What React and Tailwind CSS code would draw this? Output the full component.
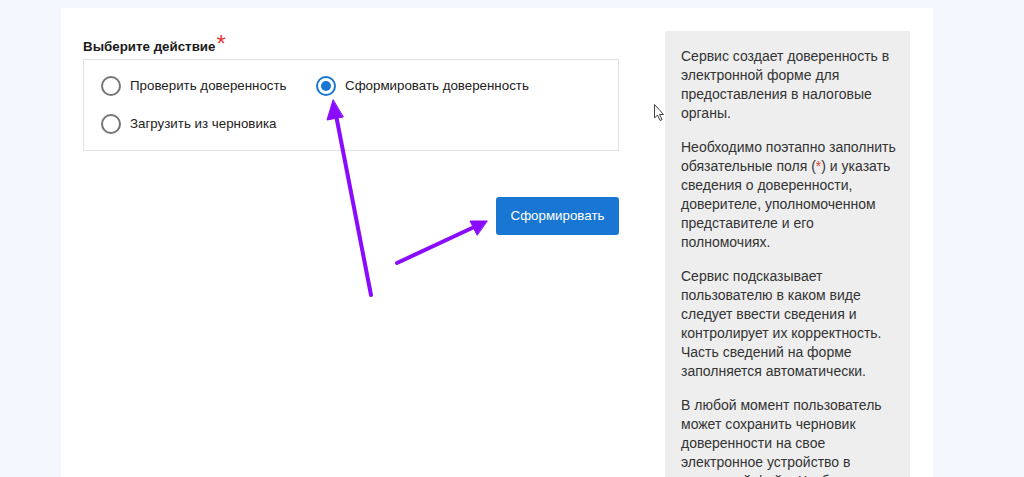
import React from 'react';

const options = [
  { id: 'check', label: 'Проверить доверенность' },
  { id: 'create', label: 'Сформировать доверенность' },
  { id: 'draft', label: 'Загрузить из черновика' },
];

function Radio({ checked, label }) {
  return (
    <label className="flex items-center gap-[9px] h-6 cursor-pointer">
      <span
        className={
          'flex items-center justify-center w-5 h-5 rounded-full border-2 ' +
          (checked ? 'border-[#1976d2]' : 'border-[#757575]')
        }
      >
        {checked && <span className="w-[10px] h-[10px] rounded-full bg-[#1976d2]" />}
      </span>
      <span className="text-[13.33px] text-[#222]">{label}</span>
    </label>
  );
}

export default function App() {
  const selected = 'create';
  return (
    <div className="relative h-screen overflow-hidden bg-[#f4f7fd]" style={{ fontFamily: '"Liberation Sans", Arial, sans-serif' }}>
      <div className="ml-[61px] mt-2 w-[872px] h-[600px] bg-white flex pt-[23px] pl-[22px] pr-[23px]">
        <div className="w-[536px]">
          <div className="h-5 leading-5 text-[13.33px] font-bold text-[#1a1a1a]">
            Выберите действие<span className="relative top-[1px] ml-[1px] text-[24px] leading-none font-normal text-[#e53935]">*</span>
          </div>
          <div className="mt-2 border border-[#e2e2e2] pt-[14px] pb-[14px] pl-[17px]">
            <div className="grid grid-cols-[215px_auto] gap-y-[14px]">
              {options.map((o) => (
                <Radio key={o.id} checked={o.id === selected} label={o.label} />
              ))}
            </div>
          </div>
          <div className="flex justify-end mt-[46px]">
            <button className="h-[38px] w-[123px] rounded-[3px] bg-[#1976d2] text-white text-[13.33px]">
              Сформировать
            </button>
          </div>
        </div>
        <div className="ml-[46px] w-[245px] bg-[#eeeeee] pt-4 pl-4 pr-3 text-[14px] leading-[19px] text-[#333]">
          <p className="mb-[15px]">Сервис создает доверенность в электронной форме для предоставления в налоговые органы.</p>
          <p className="mb-[15px]">
            Необходимо поэтапно заполнить обязательные поля (<span className="text-[#e53935]">*</span>) и указать сведения о доверенности, доверителе, уполномоченном представителе и его полномочиях.
          </p>
          <p className="mb-[15px]">Сервис подсказывает пользователю в каком виде следует ввести сведения и контролирует их корректность. Часть сведений на форме заполняется автоматически.</p>
          <p className="mb-[15px]">В любой момент пользователь может сохранить черновик доверенности на свое электронное устройство в отдельный файл. Чтобы продолжить работу, загрузите черновик.</p>
        </div>
      </div>

      <svg className="absolute inset-0 pointer-events-none" width="1024" height="477" viewBox="0 0 1024 477">
        <g stroke="#8a0cff" strokeWidth="4" strokeLinecap="round" fill="#8a0cff">
          <line x1="371" y1="295" x2="336" y2="115" />
          <polygon points="333,100 327,120 343,117" strokeWidth="1" strokeLinejoin="round" />
          <line x1="397" y1="263" x2="472" y2="228" />
          <polygon points="487,221 470,221 477,235" strokeWidth="1" strokeLinejoin="round" />
        </g>
        <path d="M654.5 104.5 L654.5 118 L657.5 115 L660 120.5 L662 119.5 L659.5 114.5 L663.5 114.5 Z" fill="#fff" stroke="#444" strokeWidth="1" strokeLinejoin="round" />
      </svg>
    </div>
  );
}
